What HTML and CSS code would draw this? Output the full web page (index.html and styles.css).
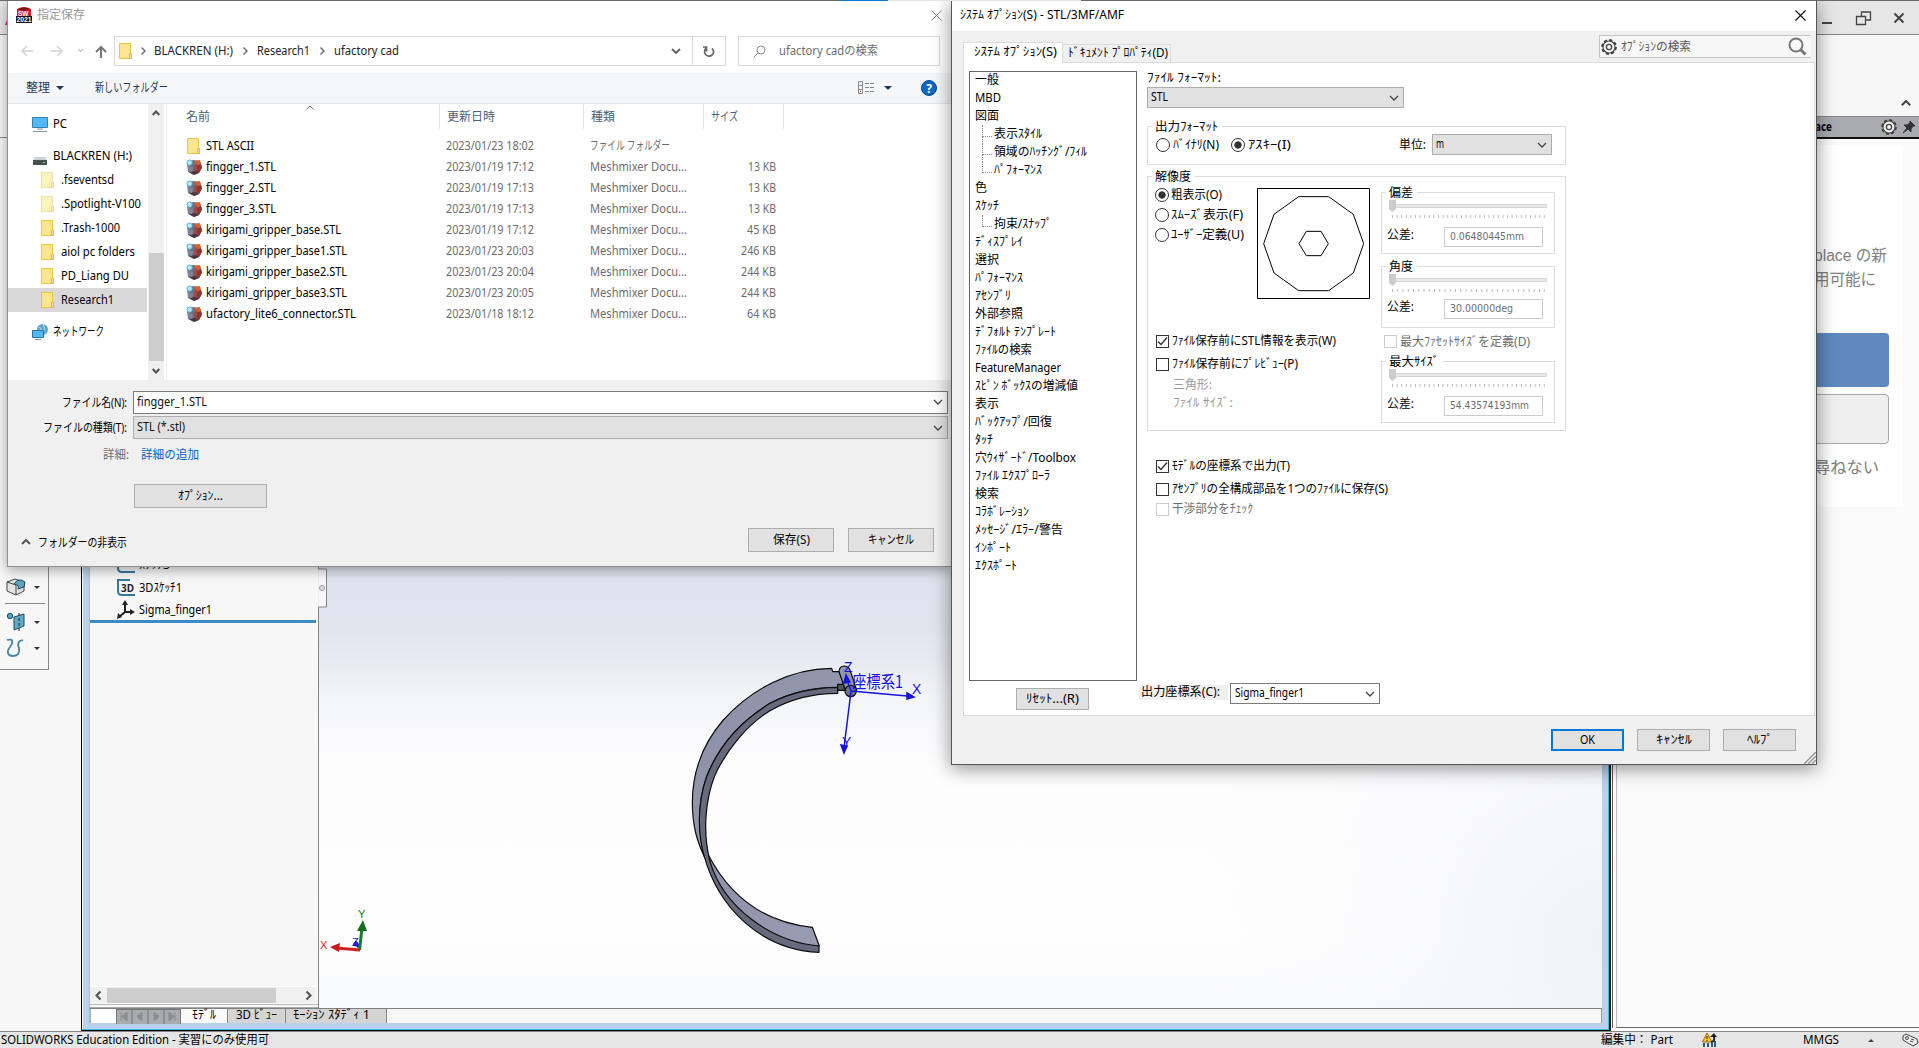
FILE: index.html
```html
<!DOCTYPE html>
<html lang="ja">
<head>
<meta charset="utf-8">
<title>SOLIDWORKS</title>
<link rel="stylesheet" href="styles.css">
</head>
<body>
<svg class="defs" width="0" height="0">
  <symbol id="folder" viewBox="0 0 16 16"><path d="M1.5 .5h11v10h1v5h-12z" fill="#ffe58f" stroke="#e9c547"/><path d="M11.5 15.5v-5h2v5z" fill="#ffe9a0" stroke="#e3b93c"/></symbol>
  <symbol id="stl" viewBox="0 0 16 16"><path d="M1 4l6-3 7 1 2 6-3 6-5 2-6-3z" fill="#6c6f80"/><path d="M8 2l6-1 1 4-4 2z" fill="#d9622c"/><path d="M10 7l5-2 1 4-3 5-4-2z" fill="#8e3530"/><path d="M8 7l3-3 0 8-3 1z" fill="#a04848"/><path d="M3 13l6-1 4 2-5 2z" fill="#4b3440"/><path d="M2 7l5 1-1 5-4-1z" fill="#7f8498"/><circle cx="3.6" cy="3.6" r="2.6" fill="#bfe6f4" stroke="#4fb4d8"/></symbol>
  <symbol id="chev" viewBox="0 0 10 6"><path d="M1 1l4 4 4-4" fill="none" stroke="currentColor" stroke-width="1.3"/></symbol>
  <symbol id="gear" viewBox="0 0 16 16"><circle cx="8" cy="8" r="6.6" fill="none" stroke="#444" stroke-width="2.6" stroke-dasharray="3.1 2.08"/><circle cx="8" cy="8" r="6" fill="#f4f4f4" stroke="#444" stroke-width="1.1"/><circle cx="8" cy="8" r="2.6" fill="none" stroke="#444" stroke-width="1.3"/></symbol>
  <symbol id="tick" viewBox="0 0 11 11"><path d="M1 5.5l3 3 6-7" fill="none" stroke="#333" stroke-width="1.4"/></symbol>
</svg>

<div class="app">
  <header class="app-title">
    <svg class="logo-bit" width="8" height="32" viewBox="0 0 8 32"><path d="M7 13v12H5l2-5z" fill="#d8322a"/></svg>
    <svg class="win-btns" width="90" height="34" viewBox="1820 0 90 34" fill="none" stroke="#444"><path d="M1822 23h10" stroke-width="2"/><path d="M1856.500 16.500h9v8h-9zM1861.500 16v-4h9v8h-5" stroke-width="1.3"/><path d="M1894.500 13.500l9 9m0-9l-9 9" stroke-width="2"/></svg>
  </header>
  <div class="ribbon"><svg width="10" height="6" viewBox="0 0 10 6"><path d="M.8 5.200L5 1l4.200 4.200" fill="none" stroke="#444" stroke-width="2"/></svg></div>
  <div class="work">
    <aside class="left-dock">
      <div class="toolbox">
        <div class="tool t-cube"><svg width="20" height="20" viewBox="0 0 20 20"><path d="M1 5l8-3 9 3v9l-8 4-9-4z" fill="#e3e3e3" stroke="#444"/><path d="M1 5l9 3v10" fill="none" stroke="#444"/><path d="M8 7q3-5 7-4l4 2-1 5-6 2q2-4-4-5z" fill="#5fa5bd" stroke="#184f66"/></svg><i class="caret"></i></div>
        <hr>
        <div class="tool"><svg width="20" height="20" viewBox="0 0 20 20"><circle cx="4" cy="4" r="2.700" fill="#53a1bb" stroke="#17506b"/><path d="M8 5l10-3v12l-10 4z" fill="#5fa9c2" stroke="#17506b"/><path d="M13 1v18" stroke="#222" stroke-dasharray="3 2"/></svg><i class="caret"></i></div>
        <div class="tool"><svg width="20" height="20" viewBox="0 0 20 20"><path d="M1 2c7-2 6 3 3 7-4 5-2 9 3 9s7-3 6-8c-2-5 0-8 4-7.500" fill="none" stroke="#3f87a8" stroke-width="1.8"/></svg><i class="caret"></i></div>
      </div>
    </aside>
    <main class="mdi">
      <div class="mdi-body">
        <section class="tree">
          <div class="tree-rows">
            <div class="trow"><svg width="20" height="20" viewBox="0 0 20 20"><path d="M2 2v11q0 4 4 4h13" fill="none" stroke="#2f7ba3" stroke-width="2"/></svg><span data-w="31">ｽｹｯﾁ3</span></div>
            <div class="trow"><svg width="20" height="20" viewBox="0 0 20 20"><path d="M14 2H2v11q0 4 4 4h13" fill="none" stroke="#2f7ba3" stroke-width="2"/><text x="5" y="14" class="i3d">3D</text></svg><span data-w="43">3Dｽｹｯﾁ1</span></div>
            <div class="trow"><svg width="20" height="20" viewBox="0 0 20 20" fill="#222"><path d="M9 12V4m0 8h8m-8 0l-6 5" stroke="#222" stroke-width="2"/><path d="M9 0l3 5H6zM19 12l-5-3v6zM1 19l1-6 4 4z"/></svg><span data-w="73">Sigma_finger1</span></div>
          </div>
          <div class="rollback"></div>
          <div class="hscroll"><svg width="17" height="15" viewBox="0 0 17 15"><path d="M10.500 3.500L6.500 7.500l4 4" fill="none" stroke="#505050" stroke-width="2"/></svg><div class="hthumb"></div><svg width="17" height="15" viewBox="0 0 17 15"><path d="M7.500 3.500l4 4-4 4" fill="none" stroke="#505050" stroke-width="2"/></svg></div>
          <div class="tree-foot"></div>
        </section>
        <svg class="view" width="1284" height="870" viewBox="318 138 1284 870">
          <defs>
            <linearGradient id="sky" x1="0" y1="138" x2="0" y2="1008" gradientUnits="userSpaceOnUse"><stop offset="0" stop-color="#d5d9e5"/><stop offset=".56" stop-color="#e0e4ed"/><stop offset=".6" stop-color="#e7eaf1"/><stop offset=".64" stop-color="#f3f4f8"/><stop offset=".72" stop-color="#fdfdfe"/><stop offset=".92" stop-color="#fefefe"/><stop offset="1" stop-color="#f8f9fb"/></linearGradient>
            <radialGradient id="lav" cx="1602" cy="940" r="420" gradientUnits="userSpaceOnUse"><stop offset="0" stop-color="#f1f2f8"/><stop offset=".3" stop-color="#f4f5f9" stop-opacity=".8"/><stop offset="1" stop-color="#fdfdfe" stop-opacity="0"/></radialGradient>
            <linearGradient id="face" x1="0" y1="0" x2="1" y2="1"><stop offset="0" stop-color="#8b90a8"/><stop offset="1" stop-color="#989db3"/></linearGradient>
          </defs>
          <rect x="318" y="138" width="1284" height="870" fill="url(#sky)"/>
          <rect x="1100" y="500" width="502" height="508" fill="url(#lav)"/>
          <path d="M318.500 138v431h8v38h-8v401" fill="#f7f7f7" stroke="#848484"/>
          <circle cx="322" cy="588" r="2.500" fill="#ddd" stroke="#999"/>
          <g transform="translate(660 640) scale(.33333)" stroke="#0c0c0c" stroke-width="3.600" stroke-linejoin="round">
            <path d="M515 85C390 85 270 150 190 240C125 315 97 400 97 490C98 560 110 600 133 650C112 560 115 480 140 410C175 320 240 245 330 190C390 158 450 142 533 142L553 133L537 95H518z" fill="url(#face)"/>
            <path d="M145 645C200 750 290 845 457 862L478 918C350 925 180 840 145 645z" fill="url(#face)"/>
            <path d="M533 142C450 143 390 158 330 190C240 245 175 320 140 410C112 490 112 580 133 650C175 800 300 930 477 937V918C330 905 190 800 150 665C128 580 135 480 165 405C200 330 260 255 330 212C400 172 470 160 533 160z" fill="#666a7c"/>
            <path d="M533 133h22v18h-22z" fill="#555"/>
            <path d="M537 95Q538 78 553 78Q568 80 571 93L590 150L556 150z" fill="#9196ab"/>
            <circle cx="572" cy="153" r="17" fill="#70727c"/>
          </g>
          <g stroke="#1414e0" stroke-width="1.500" fill="#1414e0"><path d="M851 691l56 5M851 691l-7 57M851 691l-5-14"/><path d="M907 693l7 4-7 2zM841 745l6 1-3 7zM844 683l2-8 4 7z"/></g>
          <g class="axis"><text x="844" y="672">Z</text><text x="912" y="694">X</text><text x="842" y="747">Y</text><text x="852" y="688" class="cs" textLength="51" lengthAdjust="spacingAndGlyphs">座標系1</text></g>
          <g stroke-width="3"><path d="M355 942l4 5" stroke="#1b1bd0"/><circle cx="356" cy="944" r="2.500" fill="#2424d8"/><path d="M360 950l-24-2" stroke="#d02020"/><path d="M330 947l10-4-1 9z" fill="#c81818"/><path d="M359.500 950l2.500-22" stroke="#1d7a28"/><path d="M363 920l4 11h-10z" fill="#176a20"/></g>
          <g class="triad"><text x="320" y="949" fill="#f01818">X</text><text x="358" y="918" fill="#0d800d">Y</text><text x="352" y="946" fill="#1818e0">Z</text></g>
        </svg>
      </div>
      <nav class="mtabs">
        <div class="mpad"></div>
        <svg width="65" height="15" viewBox="0 0 65 15"><path d="M0 0h65v15H0z" fill="#a9abae"/><path d="M.5 0v15M16 0v15M32 0v15M48 0v15M64.500 0v15M0 .5h65" stroke="#777"/><path d="M11 3v9L6 7.500zM5 3v9M26 3v9l-5-4.500zM38 3v9l5-4.500zM53 3v9l5-4.500zM59 3v9" fill="#8a8c8f" stroke="#8a8c8f"/></svg>
        <div class="mtab on"><span data-w="24">ﾓﾃﾞﾙ</span></div>
        <div class="mtab t3d"><span data-w="41">3D ﾋﾞｭｰ</span></div>
        <div class="mtab tmo"><span data-w="77">ﾓｰｼｮﾝ ｽﾀﾃﾞｨ 1</span></div>
      </nav>
    </main>
    <aside class="taskpane">
      <div class="tp-card">
        <p class="tp-a"><span data-w="73">place の新</span></p>
        <p class="tp-b"><span data-w="62">用可能に</span></p>
        <div class="tp-blue"></div>
        <div class="tp-grey"></div>
        <p class="tp-c"><span data-w="65">尋ねない</span></p>
      </div>
    </aside>
  </div>
  <footer class="status">
    <span data-w="268">SOLIDWORKS Education Edition - 実習にのみ使用可</span>
    <span class="st-edit" data-w="72">編集中： Part</span>
    <svg class="st-warn" width="16" height="14" viewBox="0 0 16 14"><path d="M1 10h2v4H1zM5 10h2v4H5zM9 10h2v4H9zM12 8h2v6h-2z" fill="#2d5e78"/><path d="M5 0L.5 9h9.500z" fill="#f7c325" stroke="#a0690c"/><path d="M5 3v3m0 1v1" stroke="#222"/><path d="M9 9q4 0 3-6" fill="none" stroke="#222" stroke-width="2"/><path d="M8 4l4-4 3 4z" fill="#222"/></svg>
    <span class="st-unit" data-w="36">MMGS</span>
    <i class="caret up"></i>
    <svg class="st-tag" width="17" height="14" viewBox="0 0 17 14"><path d="M1 3l3-2 11 5 1 4-5 3L1 7z" fill="#eee" stroke="#444"/><circle cx="5" cy="5" r="1.500" fill="none" stroke="#444"/><path d="M9 6l3 1M8 8l3 1" stroke="#444"/></svg>
  </footer>
</div>
<div class="tp-head"><b data-w="17">ace</b><svg class="g" width="16" height="16"><use href="#gear"/></svg><svg width="14" height="14" viewBox="0 0 14 14"><path d="M8 1l5 5-2 0-2 3 0 3-3-3-5 4 4-5-3-3h3l3-2z" fill="#333" stroke="#333"/></svg></div>
<div class="top-edge"><i></i><b></b><u></u></div>

<section class="win save">
  <div class="s-title">
    <svg width="16" height="16" viewBox="0 0 16 16"><path d="M1 2q7-4 14 0v8H1z" fill="#d11f26"/><path d="M2 2q6-3 12 0l-6 2z" fill="#7c1013"/><path d="M0 9h16v7H0z" fill="#111"/><text x="2" y="9" class="lg">SW</text><text x=".5" y="15.200" class="lg" textLength="15" lengthAdjust="spacingAndGlyphs">2021</text></svg>
    <span data-w="48">指定保存</span>
    <svg class="x" width="11" height="11" viewBox="0 0 11 11"><path d="M.5.5l10 10m0-10l-10 10" stroke="#888" fill="none"/></svg>
  </div>
  <div class="s-nav">
    <svg class="navs" width="86" height="30" viewBox="20 36 86 30" fill="none" stroke-width="2"><path d="M33 51H22m5-5l-5 5 5 5M51 51h11m-5-5l5 5-5 5" stroke="#d2d2d2" stroke-width="1.500"/><path d="M78 49l2.500 2.500L83 49" stroke="#ccc" stroke-width="1.500"/><path d="M101 58V47m-5 5l5-5 5 5" stroke="#777"/></svg>
    <div class="addr">
      <svg width="16" height="16"><use href="#folder"/></svg>
      <svg class="sep" width="5" height="8" viewBox="0 0 5 8"><path d="M.5.5L4 4 .5 7.500" fill="none" stroke="#666" stroke-width="1.400"/></svg><span data-w="79">BLACKREN (H:)</span>
      <svg class="sep s2" width="5" height="8" viewBox="0 0 5 8"><path d="M.5.5L4 4 .5 7.500" fill="none" stroke="#666" stroke-width="1.400"/></svg><span data-w="53">Research1</span>
      <svg class="sep s2" width="5" height="8" viewBox="0 0 5 8"><path d="M.5.5L4 4 .5 7.500" fill="none" stroke="#666" stroke-width="1.400"/></svg><span data-w="65">ufactory cad</span>
      <svg class="adrop" width="10" height="6" viewBox="0 0 10 6"><path d="M1 1l4 4 4-4" fill="none" stroke="#666" stroke-width="2"/></svg>
      <div class="refresh"><svg width="12" height="12" viewBox="0 0 12 12"><path d="M9 2.800a4.500 4.500 0 1 1-5.500-.3M3.500 6V1.500H0" transform="translate(0 .5)" fill="none" stroke="#666" stroke-width="1.700"/></svg></div>
    </div>
    <div class="find"><svg width="13" height="13" viewBox="0 0 13 13"><circle cx="8" cy="5" r="4" fill="none" stroke="#8a8a8a"/><path d="M5 8L.5 12.500" stroke="#8a8a8a"/></svg><span data-w="99">ufactory cadの検索</span></div>
  </div>
  <div class="s-bar">
    <span data-w="24">整理</span><i class="tri"></i><span class="nf" data-w="73">新しいフォルダー</span>
    <svg class="vw" width="17" height="13" viewBox="0 0 17 13"><path d="M.5.5h4v12h-4zM.5 4.500h4M.5 8.500h4M7 2.500h4m1 0h4M7 6.500h4m1 0h4M7 10.500h4m1 0h4" fill="none" stroke="#888"/><path d="M2 10h1v1H2z" fill="#c22"/></svg><i class="tri t2"></i>
    <svg class="help" width="16" height="16" viewBox="0 0 16 16"><circle cx="8" cy="8" r="7.500" fill="#0a66c8" stroke="#064a9a"/><text x="8" y="12.500" text-anchor="middle" class="q">?</text></svg>
  </div>
  <div class="s-main">
    <nav class="side">
      <div class="sr top"><svg width="16" height="16" viewBox="0 0 16 16"><path d="M.5 1.500h15v10H.5z" fill="#4fb9f5" stroke="#3180b0"/><path d="M5 13h6M1 15.500h14" stroke="#7e95a4"/></svg><span data-w="14">PC</span></div>
      <div class="sr top gap"><svg class="drv" width="16" height="16" viewBox="0 0 16 16"><path d="M3 7h10l2 3H1z" fill="#d0d3d6"/><path d="M1 10h14v5H1z" fill="#4a4d50"/><path d="M11 12h2v1h-2z" fill="#4fe05a"/></svg><span data-w="79">BLACKREN (H:)</span></div>
      <div class="sr"><svg class="dim" width="16" height="16"><use href="#folder"/></svg><span data-w="53">.fseventsd</span></div>
      <div class="sr"><svg class="dim" width="16" height="16"><use href="#folder"/></svg><span data-w="80">.Spotlight-V100</span></div>
      <div class="sr"><svg width="16" height="16"><use href="#folder"/></svg><span data-w="59">.Trash-1000</span></div>
      <div class="sr"><svg width="16" height="16"><use href="#folder"/></svg><span data-w="74">aiol pc folders</span></div>
      <div class="sr"><svg width="16" height="16"><use href="#folder"/></svg><span data-w="68">PD_Liang DU</span></div>
      <div class="sr sel"><svg width="16" height="16"><use href="#folder"/></svg><span data-w="53">Research1</span></div>
      <div class="sr top gap"><svg width="16" height="16" viewBox="0 0 16 16"><circle cx="10.500" cy="5.500" r="5.500" fill="#5ca7cf"/><path d="M7 3q3 1 2 4M11 0q3 4 0 9" stroke="#bfe3f3" fill="none"/><path d="M.5 6.500h11v7H.5z" fill="#4fb9f5" stroke="#2b739f"/><path d="M3 15.500h6" stroke="#7e95a4"/></svg><span data-w="51">ネットワーク</span></div>
    </nav>
    <div class="vs"><svg width="8" height="6" viewBox="0 0 8 6"><path d="M.7 5L4 1.500 7.300 5" fill="none" stroke="#505050" stroke-width="2"/></svg><div class="vthumb"></div><svg width="8" height="6" viewBox="0 0 8 6"><path d="M.7 1L4 4.500 7.300 1" fill="none" stroke="#505050" stroke-width="2"/></svg></div>
    <div class="files">
      <svg class="sort" width="8" height="5" viewBox="0 0 8 5"><path d="M.5 4.500L4 1l3.500 3.500" fill="none" stroke="#777"/></svg>
      <div class="fh"><div><span data-w="24">名前</span></div><div><span data-w="48">更新日時</span></div><div><span data-w="24">種類</span></div><div><span data-w="27">サイズ</span></div></div>
      <div class="fr"><svg width="16" height="16"><use href="#folder"/></svg><b><span data-w="48">STL ASCII</span></b><i><span data-w="88">2023/01/23 18:02</span></i><i><span data-w="80">ファイル フォルダー</span></i><u></u></div>
      <div class="fr"><svg width="16" height="16"><use href="#stl"/></svg><b><span data-w="70">fingger_1.STL</span></b><i><span data-w="88">2023/01/19 17:12</span></i><i><span data-w="97">Meshmixer Docu...</span></i><u><span data-w="28">13 KB</span></u></div>
      <div class="fr"><svg width="16" height="16"><use href="#stl"/></svg><b><span data-w="70">fingger_2.STL</span></b><i><span data-w="88">2023/01/19 17:13</span></i><i><span data-w="97">Meshmixer Docu...</span></i><u><span data-w="28">13 KB</span></u></div>
      <div class="fr"><svg width="16" height="16"><use href="#stl"/></svg><b><span data-w="70">fingger_3.STL</span></b><i><span data-w="88">2023/01/19 17:13</span></i><i><span data-w="97">Meshmixer Docu...</span></i><u><span data-w="28">13 KB</span></u></div>
      <div class="fr"><svg width="16" height="16"><use href="#stl"/></svg><b><span data-w="135">kirigami_gripper_base.STL</span></b><i><span data-w="88">2023/01/19 17:12</span></i><i><span data-w="97">Meshmixer Docu...</span></i><u><span data-w="29">45 KB</span></u></div>
      <div class="fr"><svg width="16" height="16"><use href="#stl"/></svg><b><span data-w="141">kirigami_gripper_base1.STL</span></b><i><span data-w="88">2023/01/23 20:03</span></i><i><span data-w="97">Meshmixer Docu...</span></i><u><span data-w="35">246 KB</span></u></div>
      <div class="fr"><svg width="16" height="16"><use href="#stl"/></svg><b><span data-w="141">kirigami_gripper_base2.STL</span></b><i><span data-w="88">2023/01/23 20:04</span></i><i><span data-w="97">Meshmixer Docu...</span></i><u><span data-w="35">244 KB</span></u></div>
      <div class="fr"><svg width="16" height="16"><use href="#stl"/></svg><b><span data-w="141">kirigami_gripper_base3.STL</span></b><i><span data-w="88">2023/01/23 20:05</span></i><i><span data-w="97">Meshmixer Docu...</span></i><u><span data-w="35">244 KB</span></u></div>
      <div class="fr"><svg width="16" height="16"><use href="#stl"/></svg><b><span data-w="150">ufactory_lite6_connector.STL</span></b><i><span data-w="88">2023/01/18 18:12</span></i><i><span data-w="97">Meshmixer Docu...</span></i><u><span data-w="29">64 KB</span></u></div>
    </div>
  </div>
  <div class="s-foot">
    <div class="ff"><label><span data-w="65">ファイル名(N):</span></label><div class="box white"><span data-w="70">fingger_1.STL</span><svg width="10" height="6"><use href="#chev"/></svg></div></div>
    <div class="ff"><label><span data-w="84">ファイルの種類(T):</span></label><div class="box"><span data-w="48">STL (*.stl)</span><svg width="10" height="6"><use href="#chev"/></svg></div></div>
    <div class="detail"><span data-w="26">詳細:</span><span class="lnk" data-w="58">詳細の追加</span></div>
    <div class="btn opt"><span data-w="45">ｵﾌﾟｼｮﾝ...</span></div>
    <div class="last"><svg width="10" height="6" viewBox="0 0 10 6"><path d="M1 5l4-4 4 4" fill="none" stroke="#555" stroke-width="2"/></svg><span data-w="89">フォルダーの非表示</span><div class="btn sv"><span data-w="37">保存(S)</span></div><div class="btn cn"><span data-w="46">キャンセル</span></div></div>
  </div>
</section>

<section class="win opts">
  <div class="o-title"><span data-w="164">ｼｽﾃﾑ ｵﾌﾟｼｮﾝ(S) - STL/3MF/AMF</span><svg width="11" height="11" viewBox="0 0 11 11"><path d="M.5.5l10 10m0-10l-10 10" stroke="#111" stroke-width="1.200" fill="none"/></svg></div>
  <div class="o-head">
    <div class="otab on"><span data-w="83">ｼｽﾃﾑ ｵﾌﾟｼｮﾝ(S)</span></div><div class="otab"><span data-w="100">ﾄﾞｷｭﾒﾝﾄ ﾌﾟﾛﾊﾟﾃｨ(D)</span></div>
    <div class="osearch"><svg width="16" height="16"><use href="#gear"/></svg><span data-w="70">ｵﾌﾟｼｮﾝの検索</span><svg class="mag" width="19" height="19" viewBox="0 0 19 19"><circle cx="8" cy="8" r="6.500" fill="none" stroke="#777" stroke-width="2"/><path d="M12.500 12.500l5 5" stroke="#777" stroke-width="3"/></svg></div>
  </div>
  <div class="page">
    <div class="cats">
      <ul>
        <li><span data-w="24">一般</span></li><li><span data-w="26">MBD</span></li><li><span data-w="24">図面</span></li>
        <li class="sub mid"><span data-w="48">表示ｽﾀｲﾙ</span></li><li class="sub mid"><span data-w="93">領域のﾊｯﾁﾝｸﾞ/ﾌｨﾙ</span></li><li class="sub"><span data-w="48">ﾊﾟﾌｫｰﾏﾝｽ</span></li>
        <li><span data-w="12">色</span></li><li><span data-w="24">ｽｹｯﾁ</span></li><li class="sub"><span data-w="58">拘束/ｽﾅｯﾌﾟ</span></li>
        <li><span data-w="48">ﾃﾞｨｽﾌﾟﾚｲ</span></li><li><span data-w="24">選択</span></li><li><span data-w="48">ﾊﾟﾌｫｰﾏﾝｽ</span></li><li><span data-w="36">ｱｾﾝﾌﾞﾘ</span></li>
        <li><span data-w="48">外部参照</span></li><li><span data-w="81">ﾃﾞﾌｫﾙﾄ ﾃﾝﾌﾟﾚｰﾄ</span></li><li><span data-w="57">ﾌｧｲﾙの検索</span></li><li><span data-w="86">FeatureManager</span></li>
        <li><span data-w="103">ｽﾋﾟﾝ ﾎﾞｯｸｽの増減値</span></li><li><span data-w="24">表示</span></li><li><span data-w="77">ﾊﾞｯｸｱｯﾌﾟ/回復</span></li><li><span data-w="18">ﾀｯﾁ</span></li>
        <li><span data-w="101">穴ｳｨｻﾞｰﾄﾞ/Toolbox</span></li><li><span data-w="75">ﾌｧｲﾙ ｴｸｽﾌﾟﾛｰﾗ</span></li><li><span data-w="24">検索</span></li><li><span data-w="54">ｺﾗﾎﾞﾚｰｼｮﾝ</span></li>
        <li><span data-w="88">ﾒｯｾｰｼﾞ/ｴﾗｰ/警告</span></li><li><span data-w="36">ｲﾝﾎﾟｰﾄ</span></li><li><span data-w="42">ｴｸｽﾎﾟｰﾄ</span></li>
      </ul>
      <div class="btn reset"><span data-w="53">ﾘｾｯﾄ...(R)</span></div>
    </div>
    <div class="form">
      <div class="flabel"><span data-w="74">ﾌｧｲﾙ ﾌｫｰﾏｯﾄ:</span></div>
      <div class="sel-box fmt"><span data-w="17">STL</span><svg width="10" height="6"><use href="#chev"/></svg></div>
      <fieldset class="f1"><legend><span data-w="63">出力ﾌｫｰﾏｯﾄ</span></legend>
        <div class="outrow"><i class="rad"></i><span data-w="46">ﾊﾞｲﾅﾘ(N)</span><i class="rad on r2"></i><span data-w="43">ｱｽｷｰ(I)</span><span class="unit" data-w="27">単位:</span><div class="sel-box u"><span data-w="8">m</span><svg width="10" height="6"><use href="#chev"/></svg></div></div>
      </fieldset>
      <fieldset class="f2"><legend><span data-w="36">解像度</span></legend>
        <div class="res">
          <div class="rl">
            <div class="rtop">
              <div class="rads"><div><i class="rad on"></i><span data-w="51">粗表示(O)</span></div><div><i class="rad"></i><span data-w="72">ｽﾑｰｽﾞ表示(F)</span></div><div><i class="rad"></i><span data-w="73">ﾕｰｻﾞｰ定義(U)</span></div></div>
              <svg class="prev" width="113" height="111" viewBox="0 0 339 333" fill="none" stroke="#000" stroke-width="3"><path d="M1.500 1.500h336v330h-336z"/><path d="M125 26h90l74 53 31 88-31 88-74 53h-90l-74-53-31-88 31-88zM148 130h44l22 37-22 36h-44l-22-36z"/></svg>
            </div>
            <div class="ck"><i class="cb"><svg width="11" height="11"><use href="#tick"/></svg></i><span data-w="164">ﾌｧｲﾙ保存前にSTL情報を表示(W)</span></div>
            <div class="ck c2"><i class="cb"></i><span data-w="126">ﾌｧｲﾙ保存前にﾌﾟﾚﾋﾞｭｰ(P)</span></div>
            <div class="info i1"><span data-w="39">三角形:</span></div>
            <div class="info"><span data-w="60">ﾌｧｲﾙ ｻｲｽﾞ:</span></div>
          </div>
          <div class="rr">
            <fieldset><legend><span data-w="24">偏差</span></legend>
              <svg class="sl" width="172" height="22" viewBox="1382 199 172 22"><path d="M1395 204.500h151.500v3H1395z" fill="#e7eae9" stroke="#d3d6d5"/><path d="M1389 200h7v9l-3.500 3-3.500-3z" fill="#ccc"/><path d="M1392 216.500h153" stroke="#bbb" stroke-width="3" stroke-dasharray="1 3.600"/></svg>
              <div class="tol"><span data-w="27">公差:</span><div class="val"><span data-w="74">0.06480445mm</span></div></div></fieldset>
            <fieldset class="ang"><legend><span data-w="24">角度</span></legend>
              <svg class="sl" width="172" height="22" viewBox="1382 199 172 22"><path d="M1395 204.500h151.500v3H1395z" fill="#e7eae9" stroke="#d3d6d5"/><path d="M1389 200h7v9l-3.500 3-3.500-3z" fill="#ccc"/><path d="M1392 216.500h153" stroke="#bbb" stroke-width="3" stroke-dasharray="1 4.250"/></svg>
              <div class="tol"><span data-w="27">公差:</span><div class="val"><span data-w="63">30.00000deg</span></div></div></fieldset>
            <div class="ck dis"><i class="cb"></i><span data-w="130">最大ﾌｧｾｯﾄｻｲｽﾞを定義(D)</span></div>
            <fieldset><legend><span data-w="50">最大ｻｲｽﾞ</span></legend>
              <svg class="sl" width="172" height="22" viewBox="1382 199 172 22"><path d="M1395 204.500h151.500v3H1395z" fill="#e7eae9" stroke="#d3d6d5"/><path d="M1389 200h7v9l-3.500 3-3.500-3z" fill="#ccc"/><path d="M1392 216.500h153" stroke="#bbb" stroke-width="3" stroke-dasharray="1 3.600"/></svg>
              <div class="tol"><span data-w="27">公差:</span><div class="val"><span data-w="79">54.43574193mm</span></div></div></fieldset>
          </div>
        </div>
      </fieldset>
      <div class="low">
        <div class="ck"><i class="cb"><svg width="11" height="11"><use href="#tick"/></svg></i><span data-w="118">ﾓﾃﾞﾙの座標系で出力(T)</span></div>
        <div class="ck k2"><i class="cb"></i><span data-w="216">ｱｾﾝﾌﾞﾘの全構成部品を1つのﾌｧｲﾙに保存(S)</span></div>
        <div class="ck dis"><i class="cb"></i><span data-w="81">干渉部分をﾁｪｯｸ</span></div>
      </div>
      <div class="coord"><div class="cl"><span data-w="79">出力座標系(C):</span></div><div class="sel-box w"><span data-w="69">Sigma_finger1</span><svg width="10" height="6"><use href="#chev"/></svg></div></div>
    </div>
  </div>
  <div class="o-foot"><div class="btn ok"><span data-w="15">OK</span></div><div class="btn"><span data-w="36">ｷｬﾝｾﾙ</span></div><div class="btn"><span data-w="26">ﾍﾙﾌﾟ</span></div></div>
  <svg class="grip" width="12" height="12" viewBox="0 0 12 12"><path d="M0 12L12 0M4 12l8-8M8 12l4-4" stroke="#999" stroke-width="1.500"/></svg>
</section>
<script src="fit.js"></script>
</body>
</html>
```
FILE: styles.css
```css
*{box-sizing:border-box}
html,body{margin:0;width:1919px;height:1048px;overflow:hidden}
body{position:relative;font:12px/16px "Noto Sans","Noto Sans CJK JP",sans-serif;color:#000;background:#f7f7f7}
svg{flex:none;display:block}
[data-w]{display:inline-block;white-space:pre;transform-origin:0 50%;flex:none}
i,b,u{font-style:normal;font-weight:normal;text-decoration:none}
p{margin:0}
.defs{position:absolute}
.caret{width:0;height:0;border:3px solid transparent;border-top-color:#333;border-bottom:0;margin-left:auto}
.caret.up{border-top:0;border-bottom:3px solid #444}

/* application frame */
.app{display:flex;flex-direction:column;height:1048px}
.app-title{height:35px;background:#e6e6e6;border-bottom:1px solid #848484;display:flex;justify-content:space-between;padding-right:9px}
.ribbon{height:103px;background:#f7f7f7;border-bottom:1px solid #848484;display:flex;justify-content:flex-end;padding:65px 8px 0 0}
.work{flex:1;display:flex;min-height:0;background:#fff}
.left-dock{width:81px;background:#f7f7f7}
.toolbox{width:49px;height:532px;border-right:1px solid #888;border-bottom:1px solid #888;display:flex;flex-direction:column;justify-content:flex-end;padding-bottom:8px}
.tool{height:26px;display:flex;align-items:center;padding:0 8px 0 6px}
.toolbox hr{width:40px;height:1px;border:0;background:#888;margin:3px 0 5px 5px}
.mdi{width:1530px;border-left:1px solid #000;background:#b9d1ea;display:flex;flex-direction:column;padding:0 5px 7px 7px;border-bottom:1px solid #000;box-shadow:inset -1px -1px #2fc3dd,inset 1px 0 #fff;border-right:2px solid #111}
.mdi-body{display:flex;height:870px}
.tree{width:229px;flex:none;background:#f7f7f7;border-left:1px solid #bbb;display:flex;flex-direction:column}
.tree-rows{padding-top:416px}
.trow{height:22px;display:flex;align-items:center;gap:3px;padding-left:26px}
.trow:first-child{margin-bottom:1px}
.i3d{font:bold 10px "Noto Sans";fill:#222}
.rollback{height:3px;width:226px;background:#3a8cc6;margin-top:-1px}
.hscroll{margin-top:auto;width:226px;height:17px;background:#f0f0f0;display:flex;align-items:center;border-top:1px solid #fff}
.hthumb{width:169px;height:15px;background:#cdcdcd;margin-right:23px}
.tree-foot{height:4px;border-top:1px solid #bbb;border-bottom:1px solid #aaa;margin-top:1px}
.view{margin-right:-5px}
.axis text{font:14px "Liberation Sans";fill:#1414e0}
.axis .cs{font:17px "Noto Sans CJK JP"}
.triad text{font:11px "Liberation Sans"}
.mtabs{height:15px;border-top:1px solid #808080;background:#f7f7f7;display:flex;border-left:2px solid #a0b8bc;border-right:1px solid #999;margin-right:2px}
.mpad{width:25px;background:#fff}
.mtab{height:14px;line-height:12px;text-align:center;background:#d4d4d4;border-right:1px solid #888}
.mtab.on{width:47px;background:#fafafa}.t3d{width:58px}
.tmo{width:101px;text-align:left;padding-left:7px}
.taskpane{flex:1;margin:0 0 3px 5px;border-left:1px solid #bbb;border-bottom:1px solid #666;background:#fafafa;box-shadow:-3px 0 #fff,-4px 0 #555}
.tp-card{margin-top:7px;width:286px;height:362px;background:#fff;font:16px/24px "Liberation Sans","Noto Sans CJK JP",sans-serif;color:#808080;padding:99px 14px 0 0;display:flex;flex-direction:column}
.tp-a,.tp-b,.tp-c{padding-left:197px;height:24px}
.tp-blue{height:54px;background:#6089c0;border-radius:4px;margin-top:41px}
.tp-grey{height:50px;background:#efefef;border:1px solid #aaa;border-radius:4px;margin-top:7px}
.tp-c{margin-top:12px}
.status{height:17px;background:#e6e6e6;border-top:1px solid #848484;display:flex;align-items:center;padding-left:1px;line-height:16px}
.st-warn{margin-left:29px}
.status>.caret{margin-left:29px}
.st-tag{margin-left:28px}
.tp-head{position:absolute;left:1616px;top:116px;width:303px;height:23px;background:#a9abb0;border-top:1px solid #888;border-bottom:2px solid #111;display:flex;align-items:center;padding-left:199px}
.tp-head b{font-weight:bold;font-size:12px}
.tp-head .g{margin:0 5px 0 auto}
.tp-head svg:last-child{margin-right:3px}
.top-edge{position:absolute;inset:0 0 auto;height:1px;background:#6c6868;display:flex;padding-left:840px;z-index:5}
.top-edge b{width:193px;background:#e5e5e5}.top-edge i{width:48px;background:#0b78d6}

/* dialogs */
.win{position:absolute;display:flex;flex-direction:column}
.save{left:7px;top:1px;width:945px;height:566px;border:1px solid #909090;border-top:0;background:#fff;box-shadow:0 3px 12px rgba(0,0,0,.35)}
.opts{left:951px;top:1px;width:866px;height:764px;border:1px solid #555;border-top:0;background:#f0f0f0;box-shadow:0 3px 18px rgba(0,0,0,.45)}
.btn{width:73px;height:22px;border:1px solid #adadad;background:#e1e1e1;display:flex;align-items:center;justify-content:center}

.s-title{height:30px;display:flex;align-items:flex-start;padding:6px 9px 0 8px;color:#999;gap:5px}
.s-title .x{margin:3px 0 0 auto}
.lg{font:bold 6.500px "Liberation Sans";fill:#fff}
.s-nav{height:42px;display:flex;align-items:flex-start;padding-top:5px}
.navs{margin:0 8px 0 12px;overflow:visible}
.addr{width:612px;height:30px;border:1px solid #d9d9d9;display:flex;align-items:center;padding-left:3px;color:#222}
.sep{margin:0 8px 0 7px}.sep.s2{margin:0 9px 0 10px}
.adrop{margin:0 11px 0 auto}
.refresh{width:33px;height:28px;border-left:1px solid #d9d9d9;display:flex;align-items:center;justify-content:center}
.find{width:202px;height:30px;border:1px solid #d9d9d9;margin-left:12px;display:flex;align-items:center;padding-left:14px;gap:13px;color:#6d6d6d}
.s-bar{height:31px;background:#f4f6f8;border-bottom:1px solid #e5e7e9;display:flex;align-items:center;padding:0 14px 1px 18px;color:#1e395b}
.tri{border:4px solid transparent;border-top-color:#1e395b;border-bottom:0;margin-left:6px}
.nf{margin-left:31px}
.vw{margin-left:auto}.tri.t2{margin-left:9px}
.help{margin-left:29px}
.q{font:bold 12px "Noto Sans";fill:#fff}
.s-main{height:276px;display:flex}
.side{width:140px;padding-top:8px}
.sr{height:24px;display:flex;align-items:center;gap:5px;padding-left:32px}
.sr.top{padding-left:24px}
.sr.gap{margin-top:8px}
.drv{margin-top:4px}
.sr.sel{background:#d9d9d9;width:139px}
.dim{opacity:.55}
.vs{width:16px;background:#f0f0f0;display:flex;flex-direction:column;align-items:center;padding:6px 0 6px;justify-content:space-between}
.vthumb{width:15px;height:108px;background:#cdcdcd;margin-top:129px}
.files{flex:1;margin-left:2px;border-left:1px solid #f0f0f0;position:relative}
.sort{position:absolute;left:139px;top:1px}
.fh{display:flex;height:25px;margin-bottom:6px;color:#4c607a}
.fh div{border-right:1px solid #e5e5e5;padding:5px 0 0 7px;width:120px}
.fh div:nth-child(1){width:273px;padding-left:19px}.fh div:nth-child(2){width:144px}.fh div:nth-child(4){width:80px}
.fr{display:flex;height:21px;align-items:center;padding-left:19px}
.fr b{width:244px;padding-left:4px}.fr i{width:144px;color:#6d6d6d}.fr u{width:42px;color:#6d6d6d;display:flex;justify-content:flex-end}
.s-foot{flex:1;background:#f0f0f0;padding-top:11px;display:flex;flex-direction:column}
.ff{display:flex;align-items:center;height:23px;margin-bottom:2px}
.ff label{width:119px;display:flex;justify-content:flex-end;margin-right:6px}
.box{flex:none;width:815px;height:23px;border:1px solid #adadad;background:#e1e1e1;display:flex;align-items:center;justify-content:space-between;padding:0 4px 1px 3px;color:#111}
.box svg,.sel-box svg{color:#444;margin-top:1px}
.box.white{background:#fff;border-color:#7a7a7a;padding-bottom:2px}
.detail{display:flex;padding:6px 0 0 95px;color:#6d6d6d;gap:12px}
.lnk{color:#0066cc}
.opt{width:133px;height:24px;margin:21px 0 0 126px}
.last{display:flex;align-items:center;height:24px;margin-top:20px;padding-left:13px}
.last svg{margin:4px 7px 0 0}.last>span{margin-top:6px}
.last .btn{width:86px;height:24px}.sv{margin-left:auto}.cn{margin:0 17px 0 14px}

.o-title{height:30px;background:#fff;display:flex;justify-content:space-between;align-items:flex-start;padding:6px 10px 0 8px}
.o-title svg{margin-top:3px}
.o-head{height:31px;display:flex;align-items:flex-end;padding-left:11px}
.otab{width:108px;height:18px;border:1px solid #dcdcdc;border-width:1px 1px 0 0;padding:0 0 0 5px}
.otab.on{width:100px;height:21px;border-width:1px 1px 0 1px;background:#fff;padding:1px 0 0 10px;margin-bottom:-1px;z-index:1;position:relative}
.osearch{width:212px;height:23px;margin:0 5px 4px auto;border:1px solid #c4c4c4;border-right:0;background:#f7f7f7;display:flex;align-items:center;padding:0 4px 0 1px;gap:4px;color:#555}
.osearch .mag{margin-left:auto}
.page{margin-left:11px;width:852px;height:654px;background:#fff;border:1px solid #dcdcdc;display:flex}
.cats{width:168px;margin:8px 0 0 5px}
.cats ul{margin:0;padding:0 0 0 5px;list-style:none;height:610px;border:1px solid #646464}
.cats li{height:18px;position:relative}
.cats li.sub{padding-left:19px}
.sub::before{content:"";position:absolute;left:7px;top:-1px;width:9px;height:11px;border:1px dotted #888;border-width:0 0 1px 1px}
.sub.mid::after{content:"";position:absolute;left:7px;top:10px;height:8px;border-left:1px dotted #888}
.reset{margin:7px 0 0 47px}
.form{margin-left:10px;width:660px;padding-top:7px;display:flex;flex-direction:column}
.flabel{height:17px}
.sel-box{height:21px;border:1px solid #adadad;background:#e1e1e1;display:flex;align-items:center;justify-content:space-between;padding:0 4px 1px 3px}
.fmt{width:257px}
fieldset{margin:0;padding:0;border:1px solid #dcdcdc;min-width:0;width:419px}
legend{margin-left:4px;padding:0 4px 0 3px;height:13px;line-height:13px}
.f1{margin-top:12px;height:45px}
.outrow{display:flex;align-items:center;padding:1px 13px 0 8px;height:22px}
.rad{width:14px;height:14px;border:1px solid #333;border-radius:50%;flex:none;margin-right:3px;background:#fff}
.rad.on{background:radial-gradient(circle,#333 0 3.300px,#fff 4px)}
.r2{margin-left:12px}
.unit{position:relative}
.outrow .u{width:120px;margin-left:auto}
.f2{margin-top:5px;height:261px}
.res{display:flex}
.rl{width:233px}
.rtop{display:flex;height:148px}
.rads{width:109px;padding:2px 0 0 7px}
.rads div{display:flex;height:20px;align-items:center}
.rads .rad{margin-right:2px}
.prev{margin-top:5px}
.ck{display:flex;align-items:center;height:20px;padding-left:8px}
.cb{width:13px;height:13px;border:1px solid #333;background:#fff;margin-right:3px;flex:none}
.c2{margin-top:3px}
.info{height:18px;padding-left:25px;color:#9a9a9a}.i1{margin-top:3px}
.rr{width:174px;padding-top:3px}
.rr fieldset{width:174px;height:68px}
.rr .ang{margin-top:6px}
.tol{display:flex;align-items:flex-start;justify-content:space-between;padding:0 11px 0 5px;margin-top:6px;height:20px}
.ang .tol{margin-top:4px}
.val{width:99px;height:20px;border:1px solid #ccc;padding:1px 0 0 5px;font-family:"DejaVu Sans";font-size:11px;color:#6d6d6d}
.dis{color:#6d6d6d}.dis .cb{border-color:#ccc}
.rr .dis{height:27px;padding-left:3px}
.low{margin-top:25px}.low .k2{margin-top:3px}
.low .ck{padding-left:9px}
.coord{margin:164px 0 0 -8px;display:flex;align-items:center}
.cl{width:89px;height:15px;background:#f0f0f0;padding-left:2px;line-height:14px;margin:-2px 2px 0 0}
.sel-box.w{width:150px;background:#fff;border-color:#7a7a7a;padding-left:4px}
.o-foot{display:flex;justify-content:flex-end;gap:13px;padding:13px 20px 0 0}
.btn.ok{border:2px solid #0078d7}
.grip{position:absolute;right:0;bottom:0}
```
FILE: fit.js
```js
// Condense or widen each label to its designed width.
document.querySelectorAll('[data-w]').forEach(function (el) {
  var want = +el.dataset.w, have = el.getBoundingClientRect().width;
  el.style.transform = 'scaleX(' + want / have + ')';
  el.style.marginRight = (want - have) + 'px';
});
// Status readouts sit at fixed stops along the bar.
[['.st-edit', 1601], ['.st-unit', 1803]].forEach(function (s) {
  var el = document.querySelector(s[0]);
  el.style.marginLeft = (s[1] - el.getBoundingClientRect().left) + 'px';
});
var unit = document.querySelector('.unit');
unit.style.left = (1399 - unit.getBoundingClientRect().left) + 'px';
```
